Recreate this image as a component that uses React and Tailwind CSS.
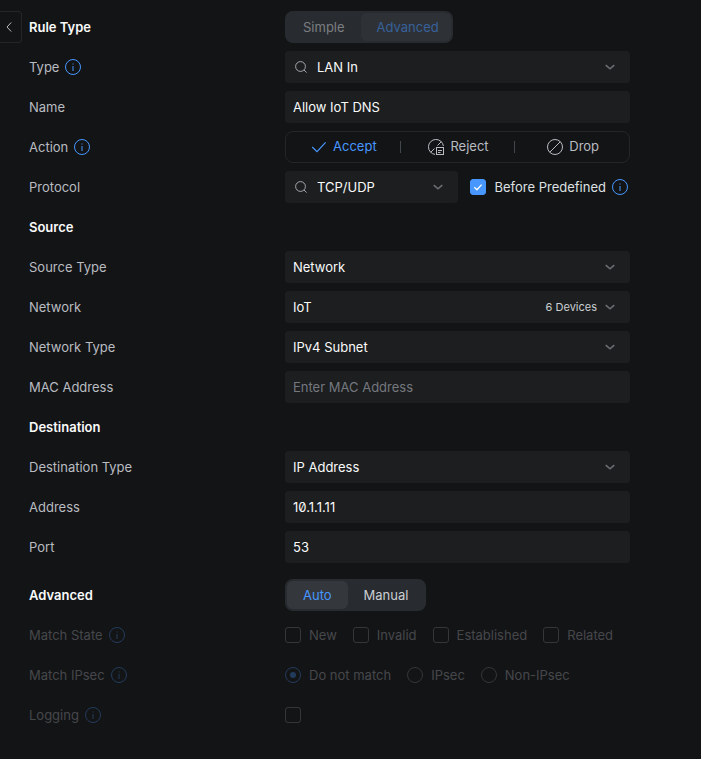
import { useId, useState } from "react";

function InfoIcon() {
    return (
        <svg className="size-4 shrink-0 text-[#4797ff]" viewBox="0 0 16 16" fill="none" stroke="currentColor" aria-hidden="true">
            <circle cx="8" cy="8" r="7.5" />
            <path d="M8 7v5" />
            <path d="M8 4.5v1" />
        </svg>
    );
}

function SearchIcon() {
    return (
        <svg className="absolute left-2.5 top-2.5 size-3 text-[#a5a8ad] pointer-events-none" viewBox="0 0 12 12" fill="none" stroke="currentColor" aria-hidden="true">
            <circle cx="5.5" cy="5.5" r="4.9" />
            <path d="M9 9l2.6 2.6" />
        </svg>
    );
}

function ChevronDown() {
    return (
        <svg className="absolute right-[15px] top-3 h-2 w-2.5 text-[#6b6e73] pointer-events-none" viewBox="0 0 10 8" fill="none" stroke="currentColor" strokeWidth="1.6" aria-hidden="true">
            <path d="M0.7 2.2L5 5.8l4.3-3.6" />
        </svg>
    );
}

function CheckIcon() {
    return (
        <svg className="size-4" viewBox="0 0 16 16" fill="none" stroke="currentColor" strokeWidth="1.2" aria-hidden="true">
            <path d="M1.2 8l4.8 4.6L14.6 3.4" />
        </svg>
    );
}

function RejectIcon() {
    return (
        <svg className="size-4" viewBox="0 0 16 16" fill="none" stroke="currentColor" aria-hidden="true">
            <path d="M7 15.4A7.5 7.5 0 1 1 15.4 7" />
            <path d="M2.7 13.3L6.5 9.5M9.5 6.5l3.8-3.8" />
            <rect x="8.5" y="8.5" width="7" height="7" />
            <path d="M10 11.5h4M10 13.5h2.5" />
        </svg>
    );
}

function DropIcon() {
    return (
        <svg className="size-4" viewBox="0 0 16 16" fill="none" stroke="currentColor" aria-hidden="true">
            <circle cx="8" cy="8" r="7.5" />
            <path d="M2.7 13.3L13.3 2.7" />
        </svg>
    );
}

function Row({ label, htmlFor, info, disabled, children }) {
    return (
        <div className={`grid grid-cols-[256px_1fr] items-center min-h-8 ${disabled ? "opacity-30" : ""}`}>
            <div className="flex items-center gap-1.5">
                {htmlFor ? <label htmlFor={htmlFor}>{label}</label> : <span>{label}</span>}
                {info && <InfoIcon />}
            </div>
            {children}
        </div>
    );
}

function Heading({ children }) {
    return <h2 className="flex items-center h-8 font-semibold text-[#f9fafa]">{children}</h2>;
}

function Select({ id, value, search, note }) {
    return (
        <div className="relative min-w-0">
            {search && <SearchIcon />}
            <select
                id={id}
                defaultValue={value}
                className={`appearance-none w-full h-8 pr-8 rounded bg-[#1c1e20] text-[#f9fafa] outline-none focus:ring-1 focus:ring-[#4797ff] ${search ? "pl-8" : "pl-2"}`}
            >
                <option>{value}</option>
            </select>
            {note && <span className="absolute right-[33px] top-2 text-[11px] leading-4 text-[#cbced2] pointer-events-none">{note}</span>}
            <ChevronDown />
        </div>
    );
}

function SelectRow({ label, info, ...rest }) {
    const id = useId();
    return (
        <Row label={label} htmlFor={id} info={info}>
            <Select id={id} {...rest} />
        </Row>
    );
}

function InputRow({ label, value, placeholder }) {
    const id = useId();
    return (
        <Row label={label} htmlFor={id}>
            <input
                id={id}
                type="text"
                defaultValue={value}
                placeholder={placeholder}
                className="w-full h-8 px-2 rounded bg-[#1c1e20] text-[#f9fafa] placeholder:text-[#74787e] outline-none focus:ring-1 focus:ring-[#4797ff]"
            />
        </Row>
    );
}

function Segmented({ label, options, value, onChange, disabled }) {
    return (
        <div role="group" aria-label={label} className="flex justify-self-start h-8 p-0.5 rounded-lg bg-[#282b2f]">
            {options.map(option => (
                <button
                    key={option}
                    type="button"
                    disabled={disabled}
                    aria-pressed={option === value}
                    onClick={() => onChange(option)}
                    className={`px-4 rounded-md ${option === value ? "bg-[#34373c] text-[#4797ff]" : "text-[#cbced2]"} ${disabled ? "opacity-50 last:pr-3" : ""}`}
                >
                    {option}
                </button>
            ))}
        </div>
    );
}

function Checkbox({ label, ...rest }) {
    return (
        <label className="flex items-center gap-2">
            <span className="relative size-4">
                <input
                    type="checkbox"
                    className="peer block appearance-none size-4 rounded-[3px] border border-[#80848a] checked:border-[#4797ff] checked:bg-[#4797ff]"
                    {...rest}
                />
                <svg className="absolute inset-0 hidden size-4 text-white pointer-events-none peer-checked:block" viewBox="0 0 16 16" fill="none" stroke="currentColor" strokeWidth="1.3" aria-hidden="true">
                    <path d="M4.3 8.2l2.7 2.6 4.6-5.2" />
                </svg>
            </span>
            {label}
        </label>
    );
}

function Radio({ label, ...rest }) {
    return (
        <label className="flex items-center gap-2">
            <span className="relative size-4">
                <input
                    type="radio"
                    className="peer block appearance-none size-4 rounded-full border border-[#80848a] checked:border-[#4797ff]"
                    {...rest}
                />
                <span className="absolute inset-[5px] hidden rounded-full bg-[#4797ff] pointer-events-none peer-checked:block" />
            </span>
            {label}
        </label>
    );
}

const actions = [
    { name: "Accept", Icon: CheckIcon },
    { name: "Reject", Icon: RejectIcon },
    { name: "Drop", Icon: DropIcon },
];

const states = ["New", "Invalid", "Established", "Related"];
const ipsecModes = ["Do not match", "IPsec", "Non-IPsec"];

export default function App() {
    const [action, setAction] = useState("Accept");
    const [mode, setMode] = useState("Auto");

    return (
        <div className="flex items-start gap-[7px] min-h-screen pt-[11px] pb-7 pr-[71px] bg-[#131416] font-[Inter,sans-serif] text-[13px] leading-5 text-[#b9bcc1] [font-feature-settings:'zero']">
            <button
                type="button"
                aria-label="Back"
                className="flex items-center justify-center shrink-0 w-[22px] h-8 pr-1 border border-l-0 border-[#242629] rounded-r"
            >
                <svg className="w-1.5 h-2.5" viewBox="0 0 6 10" fill="none" stroke="currentColor" aria-hidden="true">
                    <path d="M5.2 0.5L1 5l4.2 4.5" />
                </svg>
            </button>

            <form className="flex flex-col flex-1 min-w-0 gap-2" onSubmit={ev => ev.preventDefault()}>
                <div className="grid grid-cols-[256px_1fr]">
                    <Heading>Rule Type</Heading>
                    <Segmented label="Rule Type" options={["Simple", "Advanced"]} value="Advanced" disabled />
                </div>
                <SelectRow label="Type" info search value="LAN In" />
                <InputRow label="Name" value="Allow IoT DNS" />
                <Row label="Action" info>
                    <div role="group" aria-label="Action" className="flex items-center h-8 border border-[#242629] rounded-lg">
                        {actions.map(({ name, Icon }, i) => (
                            <button
                                key={name}
                                type="button"
                                aria-pressed={name === action}
                                onClick={() => setAction(name)}
                                className={`flex flex-1 items-center justify-center gap-1.5 h-3 pl-0.5 ${i > 0 ? "border-l border-[#42474d]" : ""} ${name === action ? "text-[#4797ff]" : ""}`}
                            >
                                <Icon />
                                <span className="pb-0.5">{name}</span>
                            </button>
                        ))}
                    </div>
                </Row>
                <Row label="Protocol" htmlFor="protocol">
                    <div className="flex items-center gap-3 pr-0.5">
                        <div className="flex-1 min-w-0">
                            <Select id="protocol" search value="TCP/UDP" />
                        </div>
                        <div className="flex items-center gap-1.5 shrink-0 text-[#dee0e3]">
                            <Checkbox label="Before Predefined" defaultChecked />
                            <InfoIcon />
                        </div>
                    </div>
                </Row>

                <Heading>Source</Heading>
                <SelectRow label="Source Type" value="Network" />
                <SelectRow label="Network" value="IoT" note="6 Devices" />
                <SelectRow label="Network Type" value="IPv4 Subnet" />
                <InputRow label="MAC Address" placeholder="Enter MAC Address" />

                <Heading>Destination</Heading>
                <SelectRow label="Destination Type" value="IP Address" />
                <InputRow label="Address" value="10.1.1.11" />
                <InputRow label="Port" value="53" />

                <div className="grid grid-cols-[256px_1fr] mt-2">
                    <Heading>Advanced</Heading>
                    <Segmented label="Advanced" options={["Auto", "Manual"]} value={mode} onChange={setMode} />
                </div>
                <Row label="Match State" info disabled>
                    <div className="flex gap-4">
                        {states.map(state => (
                            <Checkbox key={state} label={state} disabled />
                        ))}
                    </div>
                </Row>
                <Row label="Match IPsec" info disabled>
                    <div className="flex gap-4">
                        {ipsecModes.map(ipsec => (
                            <Radio key={ipsec} name="ipsec" label={ipsec} defaultChecked={ipsec === "Do not match"} disabled />
                        ))}
                    </div>
                </Row>
                <Row label="Logging" htmlFor="logging" info disabled>
                    <Checkbox id="logging" disabled />
                </Row>
            </form>
        </div>
    );
}
